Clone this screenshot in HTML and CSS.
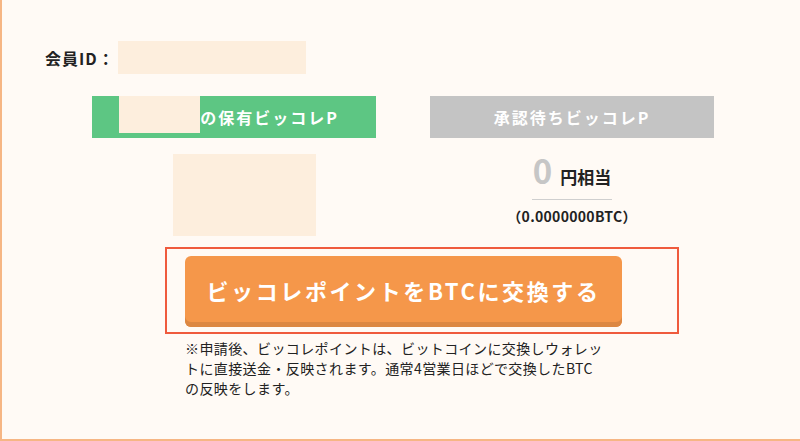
FILE: index.html
```html
<!DOCTYPE html>
<html lang="ja">
<head>
    <meta charset="UTF-8">
    <meta name="viewport" content="width=device-width, initial-scale=1.0">
    <title>ビッコレポイント交換</title>
    <link rel="stylesheet" href="styles.css">
</head>
<body>
    <div class="card">
        <div class="member">
            <span class="member-label">会員ID：</span>
            <span class="mask mask-id"></span>
        </div>

        <div class="points">
            <div class="col">
                <div class="tab tab-owned">
                    <span class="mask mask-name"></span>
                    <span>の保有ビッコレP</span>
                </div>
                <div class="owned-value">
                    <span class="mask mask-value"></span>
                </div>
            </div>
            <div class="col">
                <div class="tab tab-pending">承認待ちビッコレP</div>
                <div class="pending-value">
                    <div class="yen"><span class="yen-num">0</span><span class="yen-unit">円相当</span></div>
                    <div class="btc">（0.0000000BTC）</div>
                </div>
            </div>
        </div>

        <div class="exchange">
            <div class="highlight">
                <button class="exchange-btn">ビッコレポイントをBTCに交換する</button>
            </div>
            <p class="note">※申請後、ビッコレポイントは、ビットコインに交換しウォレットに直接送金・反映されます。通常4営業日ほどで交換したBTCの反映をします。</p>
        </div>
    </div>
</body>
</html>
```

FILE: styles.css
```css
body {
    margin: 0;
    background-color: #fffaf5;
    font-family: "Noto Sans CJK JP", "Noto Sans", sans-serif;
    color: #222;
    overflow: hidden;
}
.card {
    height: 441px;
    box-sizing: border-box;
    padding-top: 41px;
    border-left: 2px solid #f6b684;
    border-bottom: 2px solid #f6b684;
}
.mask {
    display: inline-block;
    background-color: #fdeedd;
}
.member {
    display: flex;
    align-items: center;
    padding-left: 43px;
}
.member-label {
    font-size: 16px;
    font-weight: bold;
    letter-spacing: 1px;
    margin-right: 3px;
}
.mask-id {
    width: 188px;
    height: 33px;
}
.points {
    display: flex;
    gap: 54px;
    margin-top: 22px;
    padding-left: 90px;
}
.col {
    width: 284px;
}
.tab {
    height: 42px;
    display: flex;
    align-items: center;
    justify-content: center;
    color: #fff;
    font-size: 16px;
    font-weight: bold;
    letter-spacing: 2px;
}
.tab-owned {
    background-color: #5dc683;
    padding-right: 10px;
    box-sizing: border-box;
}
.tab-owned .mask-name {
    align-self: flex-start;
    width: 81px;
    height: 37px;
}
.tab-pending {
    background-color: #c4c4c4;
}
.owned-value {
    padding: 16px 0 0 81px;
}
.mask-value {
    width: 143px;
    height: 82px;
}
.pending-value {
    display: flex;
    flex-direction: column;
    align-items: center;
    padding-top: 12px;
}
.yen {
    display: flex;
    align-items: baseline;
    padding: 0 1px 2px;
    border-bottom: 1px solid #cfcfcf;
    line-height: 40px;
}
.yen-num {
    font-size: 33px;
    font-weight: bold;
    color: #c6c6c6;
    margin-right: 8px;
}
.yen-unit {
    font-size: 17px;
    font-weight: bold;
}
.btc {
    margin-top: 6px;
    font-size: 14px;
    font-weight: bold;
    letter-spacing: 0.3px;
}
.exchange {
    margin-top: 6px;
    padding-left: 163px;
}
.highlight {
    width: 492px;
    padding: 7px 0 5px 18px;
    border: 2px solid #ef5a3d;
}
.exchange-btn {
    display: block;
    width: 437px;
    height: 71px;
    padding: 0 0 4px;
    border: none;
    border-radius: 6px;
    background-color: #f5974a;
    box-shadow: inset 0 -5px 0 #dc8742;
    color: #fff;
    font-family: "Noto Sans CJK JP", sans-serif;
    font-size: 22px;
    font-weight: bold;
    letter-spacing: 2.6px;
}
.note {
    width: 419px;
    margin: 4px 0 0 20px;
    font-size: 14px;
    line-height: 20px;
    letter-spacing: 0.4px;
    line-break: strict;
}
```
